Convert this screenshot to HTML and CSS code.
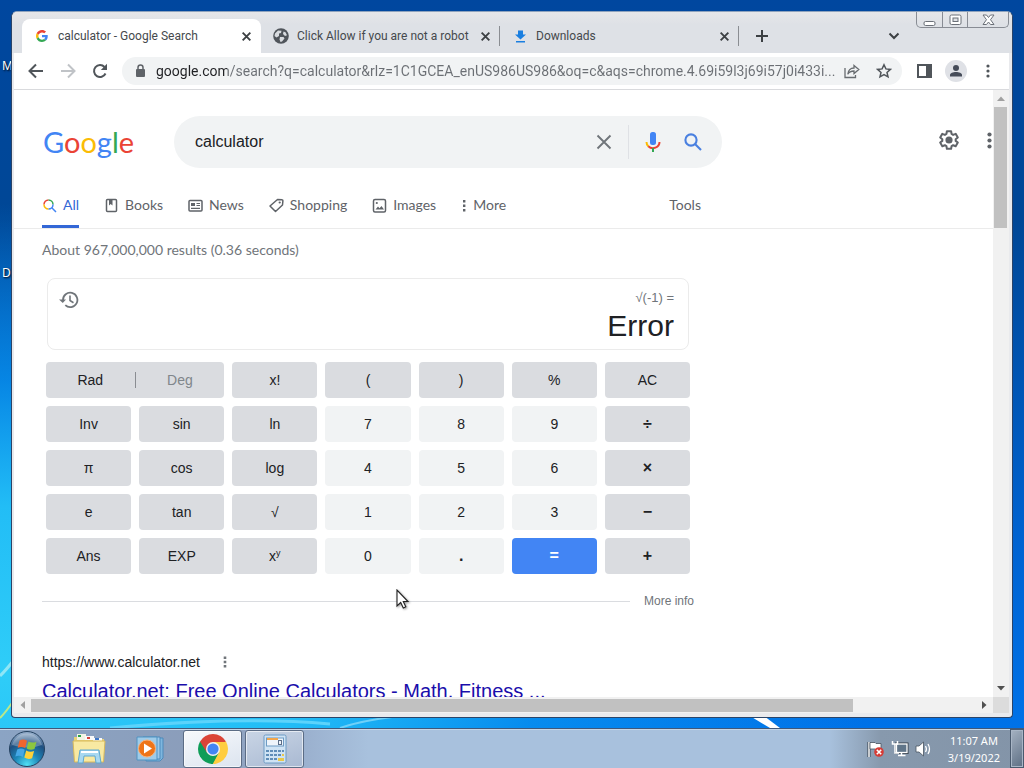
FILE: index.html
```html
<!DOCTYPE html>
<html lang="en">
<head>
<meta charset="utf-8">
<title>calculator - Google Search</title>
<link rel="stylesheet" href="styles.css">
</head>
<body>
<div class="desktop">
  <svg class="wallpaper" viewBox="0 0 1024 728" preserveAspectRatio="none" aria-hidden="true">
    <path d="M0 676Q6 670 14 660" fill="none" stroke="#8fe6f6" stroke-width="3"/>
    <path d="M0 718Q6 712 14 700" fill="none" stroke="#b9e88a" stroke-width="2"/>
    <path d="M340 728Q360 721 392 717" fill="none" stroke="#6fd0f8" stroke-width="2"/>
    <path d="M110 728Q240 716 330 724" fill="none" stroke="#5cd3fb" stroke-width="3"/>
    <path d="M750 716H764L780 728H770Z" fill="#fff"/>
  </svg>
  <span class="desk-label desk-label-top">M</span>
  <span class="desk-label desk-label-mid">D</span>

  <main class="window">
    <div class="tabstrip">
      <div class="tab tab-active">
        <svg class="fav" viewBox="0 0 48 48"><path fill="#EA4335" d="M24 9.5c3.5 0 6.700 1.200 9.200 3.600l6.900-6.900C35.900 2.400 30.500 0 24 0 14.600 0 6.500 5.400 2.600 13.200l8 6.200C12.400 13.700 17.700 9.500 24 9.500z"/><path fill="#4285F4" d="M47 24.500c0-1.600-.2-3.100-.4-4.500H24v9h13c-.6 3-2.300 5.500-4.800 7.200l7.700 6C44.400 38 47 31.800 47 24.500z"/><path fill="#FBBC05" d="M10.500 28.600c-.5-1.500-.8-3-.8-4.600s.3-3.100.8-4.600l-8-6.200C.9 16.500 0 20.100 0 24s.9 7.500 2.600 10.800z"/><path fill="#34A853" d="M24 48c6.500 0 11.900-2.100 15.900-5.800l-7.700-6c-2.200 1.500-4.900 2.300-8.200 2.300-6.300 0-11.600-4.200-13.500-9.900l-8 6.200C6.500 42.600 14.600 48 24 48z"/></svg>
        <span class="tab-title">calculator - Google Search</span>
        <button class="tab-close" aria-label="Close tab"><svg viewBox="0 0 10 10"><path d="M1.500 1.500l7 7M8.500 1.500l-7 7"/></svg></button>
      </div>
      <div class="tab">
        <svg class="fav" viewBox="0 0 16 16"><circle cx="8" cy="8" r="7.800" fill="#50555b"/><path d="M2 5.500l3-3 3.500.3L8 5l-2 .5L6 8 3.500 9.500 1.500 8zM7 9h3.500l1 1.500L9 13.500 7.500 14 6.500 11.500zM10.500 3.500l2 .8 1.500 3-2 .7-2-2z" fill="#d9dce0"/></svg>
        <span class="tab-title">Click Allow if you are not a robot</span>
        <button class="tab-close" aria-label="Close tab"><svg viewBox="0 0 10 10"><path d="M1.500 1.500l7 7M8.500 1.500l-7 7"/></svg></button>
      </div>
      <div class="tab">
        <svg class="fav" viewBox="0 0 16 16" fill="#1a7fe0"><path d="M6 2.500h5v4h3L8.500 11.500 3 6.500h3zM4 13h9v1.500H4z"/></svg>
        <span class="tab-title">Downloads</span>
        <button class="tab-close" aria-label="Close tab"><svg viewBox="0 0 10 10"><path d="M1.500 1.500l7 7M8.500 1.500l-7 7"/></svg></button>
      </div>
      <button class="strip-btn" aria-label="New tab"><svg width="14" height="14" viewBox="0 0 14 14"><path d="M7 1v12M1 7h12" stroke="#3c4043" stroke-width="2"/></svg></button>
      <button class="strip-btn strip-search" aria-label="Search tabs"><svg width="12" height="12" viewBox="0 0 12 12"><path d="M1.500 3.500L6 8l4.500-4.500" fill="none" stroke="#3c4043" stroke-width="2"/></svg></button>
      <div class="winctl">
        <button aria-label="Minimize"><svg width="13" height="14" viewBox="0 0 13 14"><rect x="1" y="8.500" width="11" height="4" rx="1.500" fill="#fff" stroke="#6b7078"/></svg></button>
        <button aria-label="Maximize"><svg width="13" height="12" viewBox="0 0 13 12"><rect x="1" y="1" width="11" height="9.500" rx="1.500" fill="#fff" stroke="#6b7078"/><rect x="4" y="4" width="5" height="3.500" fill="#dfe1e5" stroke="#6b7078"/></svg></button>
        <button class="winctl-close" aria-label="Close"><svg width="13" height="12" viewBox="0 0 13 12"><path d="M1 1h3.500l2 2.500 2-2.500H12L8.500 5.700 12 10.500H8.500l-2-2.500-2 2.500H1l3.500-4.800z" fill="#fff" stroke="#6b7078"/></svg></button>
      </div>
    </div>

    <div class="toolbar">
      <button class="tool" aria-label="Back"><svg width="16" height="16" viewBox="0 0 16 16"><path d="M15 8H2M8 1.500L1.500 8 8 14.500" fill="none" stroke="#50555a" stroke-width="2"/></svg></button>
      <button class="tool" aria-label="Forward"><svg width="16" height="16" viewBox="0 0 16 16"><path d="M1 8h13M8 1.500L14.500 8 8 14.500" fill="none" stroke="#c0c3c7" stroke-width="2"/></svg></button>
      <button class="tool" aria-label="Reload"><svg width="16" height="16" viewBox="0 0 16 16"><path d="M13.500 10.500A6 6 0 1 1 12.500 4" fill="none" stroke="#50555a" stroke-width="2"/><path d="M15 .8V7H8.800z" fill="#50555a"/></svg></button>
      <div class="omnibox">
        <svg width="12" height="14" viewBox="0 0 12 14"><rect x="2" y="5" width="9" height="8" rx="1" fill="#5f6368"/><path d="M4 5V3.500a2.500 2.500 0 0 1 5 0V5" fill="none" stroke="#5f6368" stroke-width="1.500"/></svg>
        <input class="url" type="text" aria-label="Address" value="google.com/search?q=calculator&amp;rlz=1C1GCEA_enUS986US986&amp;oq=c&amp;aqs=chrome.4.69i59l3j69i57j0i433i...">
        <button class="tool" aria-label="Share"><svg width="16" height="15" viewBox="0 0 16 15" fill="none" stroke="#686c70" stroke-width="1.300"><path d="M1 4v9.500h10.500V11"/><path d="M10 1.500L14.800 5.500 10 9.500V7C7 7 5 8 3.800 10.200 4 6.500 6.500 4 10 4z"/></svg></button>
        <button class="tool" aria-label="Bookmark"><svg width="16" height="16" viewBox="0 0 16 16"><path d="M8 1.800l1.900 4.100 4.500.5-3.400 3 1 4.400L8 11.500l-4 2.300 1-4.400-3.400-3 4.500-.5z" fill="none" stroke="#50555a" stroke-width="1.500"/></svg></button>
      </div>
      <button class="tool" aria-label="Side panel"><svg width="15" height="14" viewBox="0 0 15 14"><rect x="1" y="1" width="13" height="12" fill="none" stroke="#50555a" stroke-width="2"/><path d="M9 0h6v14H9z" fill="#50555a"/></svg></button>
      <button class="tool" aria-label="Profile"><svg width="22" height="22" viewBox="0 0 22 22"><circle cx="11" cy="11" r="11" fill="#dfe1e6"/><circle cx="11" cy="8" r="3" fill="#454b58"/><path d="M5 16.500v-1.500c0-2 3-3 6-3s6 1 6 3v1.500z" fill="#454b58"/></svg></button>
      <button class="tool" aria-label="Menu"><svg width="4" height="14" viewBox="0 0 4 14" fill="#50555a"><circle cx="2" cy="2" r="1.600"/><circle cx="2" cy="7" r="1.600"/><circle cx="2" cy="12" r="1.600"/></svg></button>
    </div>

    <div class="content">
      <div class="page">
        <header class="head">
          <a class="logo" href="#" aria-label="Google"><span class="g-blue">G</span><span class="g-red">o</span><span class="g-yellow">o</span><span class="g-blue">g</span><span class="g-green">l</span><span class="g-red">e</span></a>
          <form class="search">
            <input type="text" value="calculator" aria-label="Search">
            <button class="sbtn" type="button" aria-label="Clear"><svg width="16" height="16" viewBox="0 0 16 16"><path d="M1.500 1.500l13 13M14.500 1.500l-13 13" stroke="#70757a" stroke-width="1.900"/></svg></button>
            <span class="sdiv"></span>
            <button class="sbtn" type="button" aria-label="Voice search"><svg width="16" height="22" viewBox="0 0 16 22"><rect x="5" y="1" width="6" height="13" rx="2.500" fill="#4285f4"/><path d="M1.500 11a6.500 6 0 0 0 2 4.500" fill="none" stroke="#fbbc04" stroke-width="2"/><path d="M3.300 15.200A6.500 6 0 0 0 14.500 11" fill="none" stroke="#ea4335" stroke-width="2"/><path d="M7 17h2v4H7z" fill="#34a853"/></svg></button>
            <button class="sbtn" type="button" aria-label="Search"><svg width="18" height="18" viewBox="0 0 18 18" fill="none" stroke="#4a80e0" stroke-width="2.100"><circle cx="7" cy="7" r="5.600"/><path d="M11 11l6 6"/></svg></button>
          </form>
          <button class="gear" aria-label="Settings"><svg width="22" height="22" viewBox="0 0 24 24"><path d="M9.700 2.500h4.600l.5 2.900 1.700 1 2.800-1.100 2.300 4-2.300 1.800v1.900l2.300 1.800-2.300 4-2.800-1.100-1.700 1-.5 2.900H9.700l-.5-2.900-1.700-1-2.800 1.100-2.300-4L4.700 13v-1.900L2.400 9.300l2.300-4 2.800 1.100 1.700-1z" fill="none" stroke="#5f6368" stroke-width="2.200" stroke-linejoin="round"/><circle cx="12" cy="12" r="3.900" fill="#5f6368"/></svg></button>
          <button class="apps" aria-label="Google apps"><svg width="5" height="17" viewBox="0 0 5 17" fill="#5f6368"><circle cx="2.500" cy="2.500" r="2.100"/><circle cx="2.500" cy="8.500" r="2.100"/><circle cx="2.500" cy="14.500" r="2.100"/></svg></button>
        </header>

        <nav class="nav">
          <div class="nav-in">
            <a class="on" href="#"><svg width="15" height="15" viewBox="0 0 15 15" fill="none" stroke-width="1.500"><path d="M2 6.500A4.500 4.500 0 0 1 6.500 2" stroke="#ea4335"/><path d="M6.500 11A4.500 4.500 0 0 1 2 6.500" stroke="#fbbc04"/><path d="M6.500 2A4.500 4.500 0 0 1 11 6.500" stroke="#34a853"/><path d="M11 6.500A4.500 4.500 0 0 1 6.500 11M9.800 9.800L14 14" stroke="#4285f4"/></svg>All</a>
            <a href="#"><svg width="15" height="15" viewBox="0 0 15 15"><rect x="2.500" y="1.500" width="10" height="12" rx="1" fill="none" stroke="#5f6368" stroke-width="1.500"/><path d="M5 2h3.500v5.500L6.700 6 5 7.500z" fill="#5f6368"/></svg>Books</a>
            <a href="#"><svg width="15" height="15" viewBox="0 0 15 15"><rect x="1" y="2.500" width="13" height="10.500" rx="1" fill="none" stroke="#5f6368" stroke-width="1.500"/><path d="M3 5h4v3H3zM8.500 5H12v1H8.500zM8.500 7H12v1H8.500zM3 9.700h9v1.200H3z" fill="#5f6368"/></svg>News</a>
            <a href="#"><svg width="15" height="15" viewBox="0 0 15 15"><path d="M8.500 1.500l4.500.3c.6 0 .9.400.9 1L13.500 7 6.500 13.500 1 8z" fill="none" stroke="#5f6368" stroke-width="1.500" stroke-linejoin="round"/><circle cx="10.700" cy="4.500" r="1.100" fill="#5f6368"/></svg>Shopping</a>
            <a href="#"><svg width="15" height="15" viewBox="0 0 15 15"><rect x="1.500" y="1.500" width="12" height="12.500" rx="1.500" fill="none" stroke="#5f6368" stroke-width="1.500"/><circle cx="4.800" cy="5" r="1.100" fill="#5f6368"/><path d="M3.500 11.500L6 8.500l1.500 1.700L9.500 8l2.500 3.500z" fill="#5f6368"/></svg>Images</a>
            <a href="#"><svg width="6" height="15" viewBox="0 0 6 15" fill="#5f6368"><path d="M2 2h2.400v2.400H2zM2 6.500h2.400v2.400H2zM2 11h2.400v2.400H2z"/></svg>More</a>
            <a class="tools" href="#">Tools</a>
          </div>
        </nav>

        <div class="col">
          <p class="stats">About 967,000,000 results (0.36 seconds)</p>
          <section class="calc" aria-label="Calculator">
            <div class="display">
              <button class="hist" aria-label="History"><svg width="20" height="18" viewBox="0 0 20 18"><path d="M4 10V9a7.200 7.200 0 1 1 2.300 5.200" fill="none" stroke="#70757a" stroke-width="1.800"/><path d="M0 8.500h7L3.800 12z" fill="#70757a"/><path d="M11 4.500v5l3.500 2.200" fill="none" stroke="#70757a" stroke-width="1.600"/></svg></button>
              <div class="readout"><span class="expr">√(-1) =</span><output class="value">Error</output></div>
            </div>
            <div class="keys">
              <div class="mode"><button>Rad</button><i></i><button class="off">Deg</button></div>
              <button class="k">x!</button><button class="k">(</button><button class="k">)</button><button class="k">%</button><button class="k">AC</button>
              <button class="k">Inv</button><button class="k">sin</button><button class="k">ln</button><button class="k n">7</button><button class="k n">8</button><button class="k n">9</button><button class="k op">÷</button>
              <button class="k">π</button><button class="k">cos</button><button class="k">log</button><button class="k n">4</button><button class="k n">5</button><button class="k n">6</button><button class="k op">×</button>
              <button class="k">e</button><button class="k">tan</button><button class="k">√</button><button class="k n">1</button><button class="k n">2</button><button class="k n">3</button><button class="k op">−</button>
              <button class="k">Ans</button><button class="k">EXP</button><button class="k"><span>x<sup>y</sup></span></button><button class="k n">0</button><button class="k n op">.</button><button class="k op eq">=</button><button class="k op">+</button>
            </div>
          </section>
          <div class="more"><span class="rule"></span><a href="#">More info</a></div>
          <article class="result">
            <div class="cite"><span>https://www.calculator.net</span><button aria-label="About this result"><svg width="4" height="12" viewBox="0 0 4 12" fill="#70757a"><path d="M.7.500h2.600v2.600H.7zM.7 4.700h2.600v2.600H.7zM.7 8.900h2.600v2.600H.7z"/></svg></button></div>
            <h3><a href="#">Calculator.net: Free Online Calculators - Math, Fitness ...</a></h3>
          </article>
        </div>
      </div>
      <div class="vbar"><button aria-label="Scroll up"><svg width="8" height="5" viewBox="0 0 8 5"><path d="M0 5l4-4.500L8 5z" fill="#a0a0a0"/></svg></button><span class="vthumb"></span><button class="last" aria-label="Scroll down"><svg width="8" height="5" viewBox="0 0 8 5"><path d="M0 0h8L4 4.500z" fill="#505050"/></svg></button></div>
      <div class="hbar"><button aria-label="Scroll left"><svg width="5" height="8" viewBox="0 0 5 8"><path d="M5 0v8L.5 4z" fill="#a0a0a0"/></svg></button><span class="hthumb"></span><button class="last" aria-label="Scroll right"><svg width="5" height="8" viewBox="0 0 5 8"><path d="M0 0v8l4.500-4z" fill="#505050"/></svg></button></div>
      <div class="corner"></div>
    </div>
  </main>

  <svg class="cursor" width="14" height="21" viewBox="0 0 14 21"><path d="M1 1v16l3.700-3.500L7.300 19l2.500-1.200-2.500-5.300H12z" fill="#fff" stroke="#222" stroke-width="1.100"/></svg>
</div>

<footer class="taskbar">
  <button class="start" aria-label="Start"><svg width="38" height="38" viewBox="0 0 38 38">
    <defs><radialGradient id="orb" cx=".5" cy=".95" r=".9"><stop offset="0" stop-color="#4fe0f4"/><stop offset=".4" stop-color="#1c86b8"/><stop offset=".75" stop-color="#1f4f80"/><stop offset="1" stop-color="#90aac8"/></radialGradient></defs>
    <circle cx="19" cy="19" r="17.500" fill="url(#orb)" stroke="#24415f"/>
    <path d="M4 15A15.500 15.500 0 0 1 34 15Q20 20 4 15z" fill="#fff" opacity=".28"/>
    <path d="M11.500 10.500q4-2 7.500.3l-1.800 7.200q-3.500-2-7.500-.2z" fill="#f0652f"/><path d="M20.500 11.500q3.500 2 8 .2l-2 7.300q-4 1.600-7.800-.6z" fill="#8cc63f"/><path d="M9.200 19.500q4-1.900 7.500.2L14.800 27q-3.500-2.200-7.500-.4z" fill="#45a7e6"/><path d="M18.200 20.500q3.800 2.200 7.900.5l-2 7.300q-4 1.500-7.800-.7z" fill="#fdd13a"/></svg></button>
  <button class="pin" aria-label="Explorer"><svg width="34" height="32" viewBox="0 0 34 32"><path d="M2 4h9l2 2h19v22H2z" fill="#e8d277"/><path d="M5 1h9v6H5z" fill="#f4f4e4"/><path d="M6 2h3v2H6z" fill="#29a347"/><path d="M13 3h9v4h-9z" fill="#fafafa"/><path d="M15 4h3v2h-3z" fill="#d6433b"/><path d="M21 5h9v3h-9z" fill="#fafafa"/><path d="M23 5h4v2h-4z" fill="#3f78c8"/><path d="M1 8h32l-1.500 21h-29z" fill="#f8e9a2" stroke="#d8b95a"/><path d="M6 30l2-13h19l2 13h-5l-1-7H12l-1 7z" fill="#a8d8f0" stroke="#5fa8d0"/><path d="M9 19h17" stroke="#fff" stroke-width="2"/></svg></button>
  <button class="pin" aria-label="Media Player"><svg width="30" height="28" viewBox="0 0 30 28"><path d="M11 3h17v20l-3 3H11z" fill="#7fb6de" stroke="#4c8abb"/><path d="M8 2h17v22H8z" fill="#9cc9ea" stroke="#4c8abb"/><path d="M2 2h20v23H2z" fill="#9fcbe8" stroke="#4f93c2"/><circle cx="12" cy="13.500" r="8.500" fill="#ee7418" stroke="#f7b27c"/><path d="M9 8.500v10l8-5z" fill="#fff"/></svg></button>
  <button class="task task-on" aria-label="Chrome"><svg width="32" height="32" viewBox="0 0 32 32"><path d="M16 16L3.010 8.500A15 15 0 0 1 28.990 8.500z" fill="#db4437"/><path d="M16 16L28.990 8.500A15 15 0 0 1 16 31z" fill="#ffcd40"/><path d="M16 16L16 31A15 15 0 0 1 3.010 8.500z" fill="#0f9d58"/><path d="M16 9h13.300l-.3-.5L22.100 19.500z" fill="#ffcd40"/><path d="M22.100 19.500L16 31l-2-.1L10 19.500z" fill="#0f9d58"/><path d="M22.100 19.500L16 31h2l8-5z" fill="#ffcd40"/><path d="M9.900 19.500L3 8.500 16 9z" fill="#db4437"/><circle cx="16" cy="16" r="7" fill="#f1f1f1"/><circle cx="16" cy="16" r="5.600" fill="#4285f4"/></svg></button>
  <button class="task" aria-label="Calculator"><svg width="24" height="30" viewBox="0 0 24 30"><rect x="1" y="1" width="22" height="28" rx="1.500" fill="#cfe3f4" stroke="#6d9bc4"/><rect x="3.500" y="4" width="17" height="8" fill="#eef4fa" stroke="#6d9bc4"/><path d="M4 4h11v2H4z" fill="#f2a64b"/><rect x="15.500" y="6.500" width="3" height="4" fill="none" stroke="#5d6f88"/><path d="M3 16h3v2H3zM7 16h3v2H7zM11 16h3v2h-3zM15 16h3v2h-3zM19 16h2v2h-2zM3 20h3v2H3zM7 20h3v2H7zM11 20h3v2h-3zM15 20h3v2h-3zM3 24h3v2H3zM7 24h3v2H7zM11 24h3v2h-3z" fill="#5f8db8"/><path d="M19 20h2v2h-2zM15 24h6v3h-6z" fill="#e9c84c"/></svg></button>
  <div class="tray">
    <svg width="18" height="18" viewBox="0 0 18 18"><path d="M2 2v15" stroke="#333d49" stroke-width="3"/><path d="M2 2v15" stroke="#fff" stroke-width="1.500"/><path d="M3 2.500h5l1 1h5V10H9L8 9H3z" fill="#fff" stroke="#48535f" stroke-width=".8"/><circle cx="12" cy="12" r="4.800" fill="#d63b35"/><path d="M9.800 9.800l4.400 4.400M14.200 9.800l-4.400 4.400" stroke="#fff" stroke-width="1.600"/></svg>
    <svg width="18" height="18" viewBox="0 0 18 18"><rect x="5.500" y="4" width="10.500" height="8.500" fill="#5f7488" stroke="#333d49" stroke-width="3"/><rect x="5.500" y="4" width="10.500" height="8.500" fill="#607589" stroke="#fff" stroke-width="1.300"/><path d="M10.500 13v2M7 15.500h7.500" stroke="#fff" stroke-width="1.500"/><path d="M1.500 1v3h5V1M4 4v9h4" fill="none" stroke="#fff" stroke-width="1.500"/></svg>
    <svg width="18" height="18" viewBox="0 0 18 18"><path d="M1 6h3l4.500-4v14L4 12H1z" fill="#fff" stroke="#48535f" stroke-width=".8"/><path d="M10.500 6q1.800 3 0 6M13 4q3 5 0 10" fill="none" stroke="#fff" stroke-width="1.300"/></svg>
  </div>
  <div class="clock"><span>11:07 AM</span><span>3/19/2022</span></div>
  <button class="peek" aria-label="Show desktop"></button>
</footer>
</body>
</html>
```
FILE: styles.css
```css
* { box-sizing: border-box; }
html, body { height: 100%; margin: 0; }
body {
  display: flex;
  flex-direction: column;
  overflow: hidden;
  font-family: "Liberation Sans", Arial, sans-serif;
  font-size: 14px;
  color: #202124;
}
button {
  padding: 0;
  border: 0;
  background: none;
  color: inherit;
  font: inherit;
  display: flex;
  align-items: center;
  justify-content: center;
}
input { border: 0; outline: 0; background: none; padding: 0; min-width: 0; }
a { color: inherit; text-decoration: none; }
svg { display: block; flex: none; }

.desktop {
  position: relative;
  flex: 1;
  min-height: 0;
  display: flex;
  padding: 11px 11px 10px 11px;
  background:
    radial-gradient(ellipse 85% 64% at 0 92%, #2fcdf8 0, #22bdf6 35%, rgba(8, 146, 240, .8) 62%, rgba(0, 100, 210, 0) 100%),
    linear-gradient(#00479f, #004796 30%, #0063d2 75%, #0072e8);
}
.wallpaper { position: absolute; inset: 0; width: 100%; height: 100%; }
.desk-label {
  position: absolute;
  left: 2px;
  font: 12px/16px "Noto Sans", sans-serif;
  color: #fff;
  text-shadow: 1px 1px 2px #000;
}
.desk-label-top { top: 58px; }
.desk-label-mid { top: 265px; }

.window {
  position: relative;
  flex: 1;
  min-width: 0;
  display: flex;
  flex-direction: column;
  padding: 0 3px 4px 2px;
  border: 1px solid #2b4468;
  border-top-color: #8fa3bd;
  border-radius: 6px 6px 4px 4px;
  background: #e9eaed;
}

.tabstrip {
  display: flex;
  align-items: flex-end;
  height: 41px;
  padding-left: 8px;
  margin: 0 -3px 0 -2px;
  padding-right: 3px;
  background: linear-gradient(#e6e7e9, #dee1e6 30%);
  border-radius: 5px 5px 0 0;
  font: 12px/16px Roboto, sans-serif;
  color: #45494d;
}
.tab {
  position: relative;
  flex: 0 1 239px;
  min-width: 0;
  height: 34px;
  display: flex;
  align-items: center;
  gap: 8px;
  padding: 0 8px 0 12px;
  border-radius: 8px 8px 0 0;
}
.tabstrip .tab:first-child { margin-left: 2px; }
.tab-active { background: #fff; }
.tab:not(.tab-active)::after {
  content: "";
  position: absolute;
  right: 0;
  top: 7px;
  width: 1px;
  height: 20px;
  background: #8a8d92;
}
.fav { width: 16px; height: 16px; }
.tab-active .fav { width: 12px; height: 12px; margin: 0 2px; }
.tab-title { flex: 1; min-width: 0; overflow: hidden; white-space: nowrap; }
.tab-close { width: 14px; height: 14px; }
.tab-close svg { width: 11px; height: 11px; fill: none; stroke: #3c4043; stroke-width: 1.7; }
.strip-btn { width: 28px; height: 34px; margin-left: 9px; }
.strip-search { margin-left: auto; margin-right: 8px; }
.winctl {
  align-self: flex-start;
  display: flex;
  height: 16px;
  border: 1px solid #888c94;
  border-top: 0;
  border-radius: 0 0 5px 5px;
}
.winctl button { width: 25px; }
.winctl button + button { border-left: 1px solid #888c94; }
.winctl .winctl-close { width: 41px; }

.toolbar {
  display: flex;
  align-items: center;
  height: 37px;
  padding: 0 5px 0 6px;
  background: #fff;
  border-bottom: 1px solid #d9dadd;
}
.tool { flex: none; width: 32px; height: 28px; }
.omnibox {
  flex: 1;
  min-width: 0;
  display: flex;
  align-items: center;
  height: 28px;
  margin: 0 6px;
  padding: 0 2px 0 12px;
  border-radius: 14px;
  background: #f1f3f4;
}
.url {
  flex: 1;
  margin-left: 10px;
  font: 14px/20px Roboto, sans-serif;
  color: transparent;
  background: linear-gradient(90deg, #202124 71px, #6b6f74 71px);
  -webkit-background-clip: text;
  background-clip: text;
}

.content {
  flex: 1;
  min-height: 0;
  display: grid;
  grid-template: minmax(0, 1fr) 16px / minmax(0, 1fr) 16px;
}
.page { overflow: hidden; background: #fff; }

.head { display: flex; align-items: center; padding: 26px 0 0 28px; }
.logo { flex: none; width: 132px; padding-left: 1px; font: 29px/40px Lato, sans-serif; }
.g-blue { color: #4285f4; }
.g-red { color: #ea4335; }
.g-yellow { color: #fbbc05; }
.g-green { color: #34a853; }
.search {
  flex: 0 1 548px;
  min-width: 0;
  display: flex;
  align-items: center;
  height: 52px;
  padding: 0 9px 0 21px;
  border-radius: 26px;
  background: #f1f3f4;
}
.search input { flex: 1; font: 16px/24px "Liberation Sans", Arial, sans-serif; color: #202124; }
.sbtn { flex: none; width: 40px; height: 40px; }
.sdiv { width: 1px; height: 34px; margin: 0 4px; background: #dfe1e5; }
.gear { margin-left: auto; width: 40px; height: 40px; padding-bottom: 4px; flex: none; }
.apps { width: 8px; height: 40px; padding-bottom: 4px; margin-left: 16px; flex: none; }

.nav { border-bottom: 1px solid #ebebeb; padding: 14px 0 0 28px; }
.nav-in {
  display: flex;
  gap: 25px;
  max-width: 659px;
  font: 14px/20px Lato, sans-serif;
  color: #5f6368;
}
.nav-in a { display: flex; align-items: center; gap: 6px; height: 46px; }
.nav-in .on { color: #3367d6; box-shadow: inset 0 -3px #3367d6; }
.nav-in .tools { margin-left: auto; }

.col { max-width: 652px; margin-left: 28px; }
.stats { margin: 11px 0 0; font: 14px/20px Lato, sans-serif; color: #70757a; }
.calc { padding: 18px 4px 0; }
.display {
  display: flex;
  justify-content: space-between;
  align-items: flex-start;
  height: 72px;
  margin: 0 1px;
  padding: 11px 14px 0 11px;
  border: 1px solid #ebebeb;
  border-radius: 8px;
}
.hist { height: 20px; }
.readout { display: flex; flex-direction: column; align-items: flex-end; }
.expr { font-size: 13px; line-height: 16px; color: #70757a; }
.value { font-size: 30px; line-height: 40px; }
.keys {
  display: grid;
  grid-template-columns: repeat(7, minmax(0, 1fr));
  grid-auto-rows: 36px;
  gap: 8px;
  margin-top: 12px;
}
.k, .mode { background: #dadce0; border-radius: 4px; }
.n { background: #f1f3f4; }
.op { font-size: 16px; font-weight: bold; }
.eq { background: #4285f4; color: #fff; }
.k sup { font-size: 9px; line-height: 0; vertical-align: 5px; }
.mode { grid-column: span 2; display: flex; align-items: center; }
.mode button { flex: 1; height: 36px; }
.mode i { width: 1px; height: 16px; background: #8a8d92; }
.mode .off { color: #80868b; }
.more {
  display: flex;
  align-items: center;
  gap: 14px;
  margin-top: 17px;
  font-size: 12px;
  line-height: 20px;
  color: #70757a;
}
.rule { flex: 1; height: 1px; background: #dadce0; }
.result { margin-top: 41px; }
.cite { display: flex; align-items: center; gap: 23px; line-height: 20px; }
.result h3 {
  margin: 6px 0 0;
  font-size: 20px;
  line-height: 26px;
  font-weight: normal;
  color: #1a0dab;
  white-space: nowrap;
}

.vbar { display: flex; flex-direction: column; background: #f1f1f1; }
.vbar button { width: 16px; height: 17px; }
.vthumb { width: 13px; height: 20%; margin-left: 1px; background: #c1c1c1; }
.hbar { display: flex; align-items: center; background: #f1f1f1; }
.hbar button { width: 17px; height: 16px; }
.hthumb { width: 84%; height: 13px; background: #c1c1c1; }
.vbar .last { margin-top: auto; }
.hbar .last { margin-left: auto; }
.corner { background: #dcdcdc; }

.cursor { position: absolute; left: 396px; top: 589px; filter: drop-shadow(1px 1px 1px rgba(0, 0, 0, .4)); }

.taskbar {
  flex: none;
  height: 40px;
  display: flex;
  align-items: center;
  border-top: 1px solid #40587a;
  box-shadow: inset 0 1px #c4d6e8;
  background: linear-gradient(90deg, #8ba4c4, #8b9dba 20%, #9bb1cf 30%, #a8c1dd 36%, #a8c1dd 81%, #8799ad 86%, #8394a8);
}
.start { width: 54px; }
.pin { width: 60px; margin-left: 5px; }
.pin + .pin { margin-left: 1px; }
.task {
  width: 59px;
  height: 38px;
  margin-left: 3px;
  border: 1px solid #5b6c85;
  border-radius: 3px;
  box-shadow: inset 0 0 0 1px rgba(255, 255, 255, .6);
  background: linear-gradient(160deg, #c9d5e5, #a9b9d2);
}
.task-on { background: linear-gradient(160deg, #f7f9fc, #dce4ef); }
.tray { display: flex; gap: 6px; margin-left: auto; }
.clock {
  display: flex;
  flex-direction: column;
  align-items: center;
  margin: 0 10px 0 15px;
  font: 11px/17px "Noto Sans", sans-serif;
  color: #fff;
}
.peek {
  align-self: stretch;
  width: 14px;
  border: 1px solid #4a5a6e;
  box-shadow: inset 0 0 0 1px #a9b6c6;
  background: linear-gradient(135deg, #a5b2c2, #5e6f84);
}
```
